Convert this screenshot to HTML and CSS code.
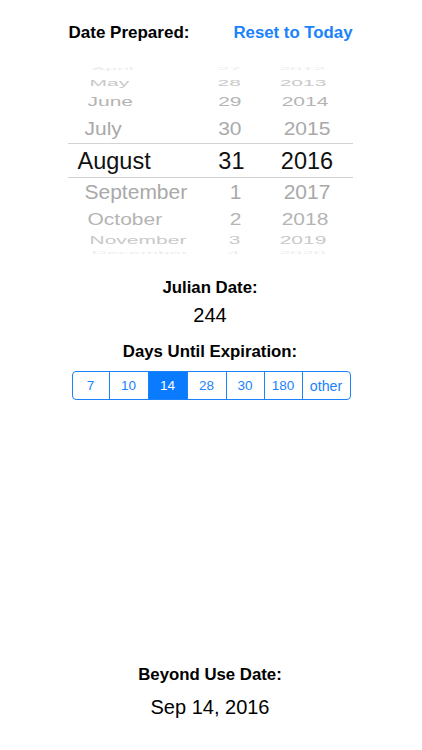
FILE: index.html
```html
<!DOCTYPE html>
<html lang="en">
<head>
<meta charset="utf-8">
<title>Beyond Use Date</title>
<link rel="stylesheet" href="styles.css">
</head>
<body>
<div class="page">
  <div class="header">
    <span class="label">Date Prepared:</span>
    <span class="link">Reset to Today</span>
  </div>

  <div class="picker">
    <div class="row d4 top4"><span class="m">April</span><span class="d">27</span><span class="y">2012</span></div>
    <div class="row d3 top3"><span class="m">May</span><span class="d">28</span><span class="y">2013</span></div>
    <div class="row d2 top2"><span class="m">June</span><span class="d">29</span><span class="y">2014</span></div>
    <div class="row d1 top1"><span class="m">July</span><span class="d">30</span><span class="y">2015</span></div>
    <div class="row sel"><span class="m">August</span><span class="d">31</span><span class="y">2016</span></div>
    <div class="row d1 bot1"><span class="m">September</span><span class="d">1</span><span class="y">2017</span></div>
    <div class="row d2 bot2"><span class="m">October</span><span class="d">2</span><span class="y">2018</span></div>
    <div class="row d3 bot3"><span class="m">November</span><span class="d">3</span><span class="y">2019</span></div>
    <div class="row d4 bot4"><span class="m">December</span><span class="d">4</span><span class="y">2020</span></div>
  </div>

  <div class="block julian">
    <div class="label">Julian Date:</div>
    <div class="value">244</div>
  </div>

  <div class="block days">
    <div class="label">Days Until Expiration:</div>
    <div class="segmented">
      <span class="seg s1">7</span>
      <span class="seg">10</span>
      <span class="seg active">14</span>
      <span class="seg">28</span>
      <span class="seg s5">30</span>
      <span class="seg s5">180</span>
      <span class="seg last">other</span>
    </div>
  </div>

  <div class="block beyond">
    <div class="label">Beyond Use Date:</div>
    <div class="value">Sep 14, 2016</div>
  </div>
</div>
</body>
</html>
```

FILE: styles.css
```css
* { box-sizing: border-box; }

html, body {
  margin: 0;
  padding: 0;
  background: #ffffff;
}

body {
  font-family: "Liberation Sans", Arial, sans-serif;
  color: #000;
}

.page {
  width: 285px;
  margin: 0 auto;
  padding-top: 23px;
  position: relative;
  left: -1px;
}

.header {
  display: flex;
  justify-content: space-between;
  align-items: center;
  height: 20px;
  line-height: 20px;
}

.label {
  font-weight: bold;
  font-size: 16.8px;
  color: #000;
}

.header .label { font-size: 17px; padding-left: 1px; }

.link {
  font-weight: bold;
  font-size: 16.8px;
  color: #1a82fb;
}

/* picker */
.picker {
  margin-top: 18px;
  height: 195px;
  overflow: hidden;
  display: flex;
  flex-direction: column;
}

.row {
  display: grid;
  grid-template-columns: 150px 27px 91px;
  column-gap: 0;
  align-items: center;
  font-size: 21px;
  line-height: 21px;
  white-space: nowrap;
  flex: none;
}

.row .m { padding-left: 10px; }
.row .d { text-align: right; }
.row .y { text-align: center; margin-left: 17px; width: 91px; }

.sel {
  height: 35px;
  border-top: 1px solid #d3d3d3;
  border-bottom: 1px solid #d3d3d3;
  font-size: 23.5px;
  line-height: 24px;
  color: #111;
}

.d1 .m { padding-left: 17px; }
.d1 .d { padding-right: 3px; }
.d2 .m { padding-left: 20px; }
.d2 .d { padding-right: 3px; }
.d2 .y { transform: translateX(-2px); }
.d3 .m { padding-left: 22px; }
.d3 .d { padding-right: 4px; }
.d3 .y { transform: translateX(-4px); }
.d4 .m { padding-left: 24px; }
.d4 .d { padding-right: 5px; }
.d4 .y { transform: translateX(-5px); }

.top4 { height: 13px; transform: scaleY(0.2); color: #ececec; }
.top3 { height: 15px; transform: scaleY(0.42); color: #c9c9c9; }
.top2 { height: 25px; transform: scaleY(0.65); color: #b4b4b4; }
.top1 { height: 29px; transform: scaleY(0.88); color: #a9a9a9; }
.bot1 { height: 28px; transform: scaleY(0.93); color: #a9a9a9; }
.bot2 { height: 25px; transform: scaleY(0.8); color: #b4b4b4; }
.bot3 { height: 15px; transform: scaleY(0.52); color: #c9c9c9; }
.bot4 { height: 10px; transform: scaleY(0.2); color: #ececec; }

/* blocks */
.block {
  display: flex;
  flex-direction: column;
  align-items: center;
  text-align: center;
}

.block .label { line-height: 22px; height: 22px; }

.value {
  font-size: 20px;
  line-height: 24px;
  height: 24px;
}

.julian { margin-top: 21px; }
.julian .value { margin-top: 4px; }

.days { margin-top: 14px; }

.segmented {
  margin-top: 8px;
  display: flex;
  height: 29px;
  border: 1px solid #1a82fb;
  border-radius: 4px;
  overflow: hidden;
  position: relative;
  left: 1px;
}

.seg {
  width: 39px;
  border-left: 1px solid #1a82fb;
  display: flex;
  align-items: center;
  justify-content: center;
  font-size: 13.5px;
  color: #1a82fb;
}

.seg.s1 { width: 36px; border-left: none; }
.seg.s5 { width: 38px; }
.seg.last { width: 48px; font-size: 14.2px; }

.seg.active {
  background: #0a7bff;
  color: #fff;
}

.beyond { margin-top: 264px; }
.beyond .value { margin-top: 9px; }
```
